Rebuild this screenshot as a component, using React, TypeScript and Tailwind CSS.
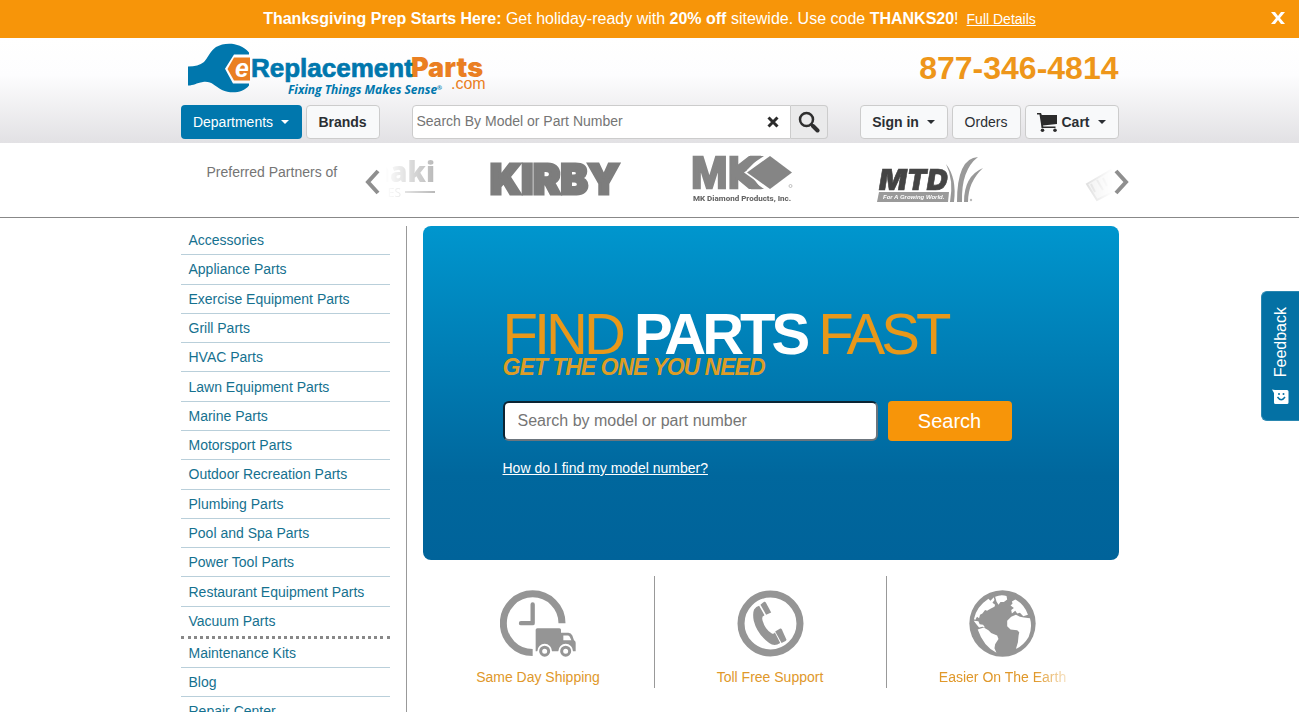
import { useState, type ReactNode } from 'react'

const DEPARTMENTS = [
  'Accessories',
  'Appliance Parts',
  'Exercise Equipment Parts',
  'Grill Parts',
  'HVAC Parts',
  'Lawn Equipment Parts',
  'Marine Parts',
  'Motorsport Parts',
  'Outdoor Recreation Parts',
  'Plumbing Parts',
  'Pool and Spa Parts',
  'Power Tool Parts',
  'Restaurant Equipment Parts',
  'Vacuum Parts',
]
const RESOURCES = ['Maintenance Kits', 'Blog', 'Repair Center']

export default function App() {
  const [promo, setPromo] = useState(true)

  return (
    <div className="min-h-screen bg-white font-['Liberation_Sans',Arial,sans-serif] text-sm text-[#2b2f33]">
      {promo && <PromoBar onClose={() => setPromo(false)} />}
      <Header />
      <Partners />
      <div className="mx-auto flex max-w-[938px] pt-2">
        <Sidebar />
        <main className="ml-4 min-w-0 flex-1">
          <Hero />
          <div className="mt-4 grid grid-cols-3">
            <Perk icon={<ShippingIcon />} className="border-r border-[#999]">Same Day Shipping</Perk>
            <Perk icon={<PhoneIcon />} className="border-r border-[#999]">Toll Free Support</Perk>
            <Perk icon={<GlobeIcon />}>
              <span className="mask-[linear-gradient(to_right,black_75%,transparent_110%)]">Easier On The Earth</span>
            </Perk>
          </div>
        </main>
      </div>
      <button className="fixed top-[291px] right-0 flex h-[130px] w-[38px] flex-col items-center justify-center gap-3 rounded-l-md border border-r-0 border-[#2a87b0] bg-[#0471a4] text-white">
        <span className="rotate-180 text-base leading-5 [writing-mode:vertical-rl]">Feedback</span>
        <FeedbackIcon />
      </button>
    </div>
  )
}

function PromoBar({ onClose }: { onClose: () => void }) {
  return (
    <div className="relative flex h-[38px] items-center justify-center bg-[#f79509] text-base text-white">
      <p>
        <b>Thanksgiving Prep Starts Here:</b> Get holiday-ready with <b>20% off</b> sitewide. Use code <b>THANKS20</b>!
        <a href="#details" className="ml-2 text-sm underline">Full Details</a>
      </p>
      <button onClick={onClose} aria-label="Close" className="absolute top-2 right-[14px]">
        <svg width="14" height="20" viewBox="0 0 14 20" fill="#fff">
          <path d="M0 4H4L7 8L10 4H14L9 10L14 16H10L7 12L4 16H0L5 10Z" />
        </svg>
      </button>
    </div>
  )
}

function Header() {
  return (
    <header className="bg-[linear-gradient(#fff_0%,#fdfdfe_35%,#e2e1e4_100%)]">
      <div className="mx-auto max-w-[938px] pt-1 pb-1">
        <div className="flex h-[56px] items-start justify-between">
          <a href="#home" aria-label="eReplacementParts.com" className="ml-[7px]">
            <Logo />
          </a>
          <a href="tel:877-346-4814" className="text-[32px] leading-[52px] font-bold text-[#ee961a]">877-346-4814</a>
        </div>
        <nav className="mt-[7px] flex h-[34px]">
          <button className="flex w-[121px] items-center justify-center gap-2 rounded bg-[#0077ad] text-white">
            Departments <Caret />
          </button>
          <button className="ml-1 w-[74px] rounded border border-[#ccc] bg-[#f8f9fa] font-bold">Brands</button>
          <form className="mx-8 flex flex-1" onSubmit={e => e.preventDefault()}>
            <div className="relative flex-1">
              <input
                aria-label="Search by model or part number"
                placeholder="Search By Model or Part Number"
                className="h-full w-full rounded-l border border-[#ccc] bg-white px-1 pb-0.5 outline-none placeholder:text-[#757575]"
              />
              <button type="button" aria-label="Clear" className="absolute top-[11px] right-3">
                <svg width="12" height="12" viewBox="0 0 12 12" fill="none" stroke="#2b2b2b" strokeWidth="3">
                  <path d="M1.5 1.5l9 9M10.5 1.5l-9 9" />
                </svg>
              </button>
            </div>
            <button aria-label="Search" className="grid w-[37px] place-items-center rounded-r border border-l-0 border-[#ccc] bg-[#eaeaeb]">
              <SearchIcon />
            </button>
          </form>
          <div className="flex gap-1">
            <NavButton className="w-[88px] font-bold">Sign in <Caret /></NavButton>
            <NavButton className="w-[69px]">Orders</NavButton>
            <NavButton className="w-[94px] font-bold">
              <span className="flex items-center gap-1"><CartIcon />Cart</span> <Caret />
            </NavButton>
          </div>
        </nav>
      </div>
    </header>
  )
}

function NavButton({ className, children }: { className: string; children: ReactNode }) {
  return (
    <button className={`flex items-center justify-center gap-2 rounded border border-[#ccc] bg-[#f8f9fa] ${className}`}>
      {children}
    </button>
  )
}

function Caret() {
  return <span className="h-0 w-0 border-x-4 border-t-4 border-x-transparent border-t-current" />
}

function Partners() {
  return (
    <section className="border-b border-[#888]">
      <div className="mx-auto flex h-[74px] max-w-[938px] text-[#757575]">
        <h2 className="ml-[26px] w-[158px] pt-5 leading-[18px]">Preferred Partners of</h2>
        <button aria-label="Previous" className="mt-1 w-4">
          <Chevron d="M13 2L3 13l10 11" />
        </button>
        <div className="ml-1 flex min-w-0 flex-1 items-center justify-center overflow-hidden pr-3 mask-[linear-gradient(to_right,transparent,black_12%,black_90%,transparent)]">
          <Partner><MakiLogo /></Partner>
          <Partner><KirbyLogo /></Partner>
          <Partner><MkLogo /></Partner>
          <Partner><MtdLogo /></Partner>
          <Partner><TagLogo /></Partner>
        </div>
        <button aria-label="Next" className="mt-1 -mr-[10px] w-4">
          <Chevron d="M3 2l10 11L3 24" />
        </button>
      </div>
    </section>
  )
}

function Partner({ children }: { children: ReactNode }) {
  return <div className="flex w-[187px] shrink-0 justify-center">{children}</div>
}

function Chevron({ d }: { d: string }) {
  return (
    <svg width="16" height="26" viewBox="0 0 16 26" fill="none" stroke="#8f8f8f" strokeWidth="4">
      <path d={d} />
    </svg>
  )
}

function Sidebar() {
  return (
    <aside className="w-[226px] border-r border-[#999] pr-4">
      <ul className="grid min-h-[413px] auto-rows-fr border-b-3 border-dotted border-[#888]">
        {DEPARTMENTS.map(d => (
          <li key={d} className="flex items-center border-b border-[#b9cfda] pl-2 last:border-b-0">
            <a href="#parts" className="text-[#15718f]">{d}</a>
          </li>
        ))}
      </ul>
      <ul>
        {RESOURCES.map(r => (
          <li key={r} className="flex h-[29px] items-center border-b border-[#b9cfda] pl-2">
            <a href="#more" className="text-[#15718f]">{r}</a>
          </li>
        ))}
      </ul>
    </aside>
  )
}

function Hero() {
  return (
    <section className="rounded-lg bg-[linear-gradient(#0096ce_0%,#00679d_75%,#00639a_100%)] px-20 pt-20 pb-[82px] text-white">
      <h1 className="text-[58px] leading-[56px] tracking-[-4px] text-[#e8981a]">
        FIND <b className="text-white">PARTS</b> FAST
      </h1>
      <p className="-mt-1 text-[23px] leading-[18px] font-bold tracking-[-1px] text-[#dd9d26] italic">GET THE ONE YOU NEED</p>
      <form className="mt-[25px] flex h-10 gap-[10px]" onSubmit={e => e.preventDefault()}>
        <input
          aria-label="Model or part number"
          placeholder="Search by model or part number"
          className="w-[375px] rounded-md border-2 border-t-[#0c2433] border-r-[#6c757d] border-b-[#6c757d] border-l-[#0c2433] bg-white px-[13px] text-base outline-none placeholder:text-[#757575]"
        />
        <button className="w-[124px] rounded bg-[#f79509] text-xl">Search</button>
      </form>
      <a href="#help" className="mt-[18px] inline-block leading-[18px] underline">How do I find my model number?</a>
    </section>
  )
}

function Perk({ icon, className = '', children }: { icon: ReactNode; className?: string; children: ReactNode }) {
  return (
    <a href="#perk" className={`flex h-28 flex-col items-center pt-[14px] text-[#e0982a] ${className}`}>
      {icon}
      <span className="mt-[11px] leading-[18px]">{children}</span>
    </a>
  )
}

function Logo() {
  return (
    <svg width="300" height="56" viewBox="0 0 300 56" className="overflow-visible font-['Liberation_Sans',Arial,sans-serif]">
      <path
        fill="#0077ad"
        d="M0 24.500C7 24.500 12 23 16 20C20 16 22 9 28 5C37 0 52 0 61 10.500V12.500H46L37 26.700L45 41.500H61V43.500C55 51 43 52 34 48C26 44 24 39 15 40C8 41 6 43.500 0 43.500Z"
      />
      <path fill="#ea7f22" d="M46 15.500H62V38.500H46L39.500 27Z" />
      <text x="47" y="35" fontSize="25" fontWeight="700" fontStyle="italic" fill="#fff">e</text>
      <text x="63" y="35" fontSize="26" fontWeight="700" fill="#0077ad" stroke="#0077ad" strokeWidth=".7">Replacement</text>
      <text x="223" y="35" fontSize="27" fontWeight="900" fill="#ea7f22" className="font-[Inter,sans-serif]">Parts</text>
      <text x="263" y="47" fontSize="16" fill="#ea7f22">.com</text>
      <text x="100" y="52" fontSize="12" fontWeight="700" fontStyle="italic" fill="#0077ad" className="font-['Open_Sans',sans-serif]">
        Fixing Things Makes Sense<tspan fontSize="6" dy="-4">®</tspan>
      </text>
    </svg>
  )
}

function SearchIcon() {
  return (
    <svg width="22" height="22" viewBox="0 0 22 22" fill="none" stroke="#2f2f2f">
      <circle cx="8.500" cy="8.500" r="6.500" strokeWidth="2.500" />
      <path d="M13 13l2.500 2.500" strokeWidth="2.500" />
      <path d="M15 15l4.500 4.500" strokeWidth="4" strokeLinecap="round" />
    </svg>
  )
}

function CartIcon() {
  return (
    <svg width="20" height="20" viewBox="0 0 20 20" fill="#2b2b2b">
      <path d="M0 1H4L4.800 3H20V12L6 13.500L6.300 14.500H18.500V16H4.500L4 12L2.500 2.500H0Z" />
      <circle cx="5.500" cy="18.200" r="1.800" />
      <circle cx="18" cy="18.200" r="1.800" />
    </svg>
  )
}

function FeedbackIcon() {
  return (
    <svg width="18" height="16" viewBox="0 0 18 16" fill="none">
      <path d="M0 .5L3 1H15Q16.500 1 16.500 2.500V13.500Q16.500 15 15 15H3.500Q2 15 2 13.500V4Z" fill="#fff" />
      <path d="M5.500 8Q9.200 13.500 13 8" stroke="#0471a4" strokeWidth="1.400" />
      <circle cx="7" cy="5" r="1" fill="#0471a4" />
      <circle cx="11.500" cy="5" r="1" fill="#0471a4" />
    </svg>
  )
}

function MakiLogo() {
  return (
    <svg width="132" height="48" viewBox="0 0 132 48" className="overflow-visible font-['Open_Sans',sans-serif]" fill="#858585">
      <text x="132" y="26" fontSize="28" fontWeight="800" textAnchor="end">haki</text>
      <text x="98" y="41" fontSize="12" textAnchor="end">ES</text>
      <path d="M102 35h30v2h-30z" />
    </svg>
  )
}

function KirbyLogo() {
  return (
    <svg width="134" height="48" viewBox="0 0 134 48" className="overflow-visible font-[Inter,sans-serif]">
      <text x="1" y="38" fontSize="41" fontWeight="900" fill="#7d7d7d" stroke="#7d7d7d" strokeWidth="3">KIRBY</text>
    </svg>
  )
}

function MkLogo() {
  return (
    <svg width="100" height="50" viewBox="0 0 100 50" className="overflow-visible">
      <text x="-2" y="33" fontSize="44" fontWeight="700" fill="#858585" stroke="#858585" strokeWidth="2.500" className="font-['Liberation_Sans',sans-serif]">MK</text>
      <path d="M56 1H71L47 17L71 34H56L38 19V15Z" fill="#858585" />
      <path d="M77 -1L51 17.500L77 36H100V0Z" fill="#fff" />
      <path d="M77 1L99 17.500L77 34L54 17.500Z" fill="#858585" />
      <text x="0" y="46" fontSize="8" fontWeight="800" fill="#666" className="font-[Roboto,sans-serif]">MK Diamond Products, Inc.</text>
      <circle cx="97.500" cy="31" r="1.500" fill="none" stroke="#999" strokeWidth=".6" />
    </svg>
  )
}

function MtdLogo() {
  return (
    <svg width="106" height="48" viewBox="0 0 106 48" className="overflow-visible">
      <text x="2" y="34" fontSize="29" fontWeight="900" fontStyle="italic" fill="#444" stroke="#444" strokeWidth=".6" className="font-[Inter,sans-serif]">MTD</text>
      <path d="M2 36H72L71 46H0Z" fill="#9a9a9a" />
      <text x="6" y="43" fontSize="6" fontStyle="italic" fontWeight="700" fill="#fff" className="font-['Liberation_Sans',sans-serif]">For A Growing World.</text>
      <g fill="#999">
        <path d="M69 8Q80 22 77 46H73Q77 24 69 8Z" />
        <path d="M101 1Q84 14 85 46H80Q80 2 101 1Z" />
        <path d="M106 12Q91 26 91 46H87Q87 20 106 12Z" />
      </g>
      <circle cx="94" cy="44" r="1.200" fill="#bbb" />
    </svg>
  )
}

function TagLogo() {
  return (
    <svg width="64" height="48" viewBox="0 0 64 48" fill="none" stroke="#aaa" strokeWidth="2">
      <path d="M2 28L26 14L40 30L12 44Z" fill="#ddd" />
      <path d="M6 28l4 8M12 24l6 10M18 22l4 8" />
    </svg>
  )
}

function ShippingIcon() {
  return (
    <svg width="76" height="67" viewBox="0 0 228 200" fill="#959595">
      <path d="M98 187A88 88 0 1 1 186 99" fill="none" stroke="#959595" strokeWidth="21" />
      <path d="M98 43V99H63" fill="none" stroke="#959595" strokeWidth="13" strokeLinecap="round" strokeLinejoin="round" />
      <rect x="100" y="108" width="128" height="92" fill="#fff" />
      <path d="M107 119Q107 114 112 114H178Q183 114 183 119V128H205Q213 128 217 136L222 150Q227 152 227 158V183H107Z" />
      <path d="M190 136H204Q208 136 210 141L214 150H190Z" fill="#fff" />
      <circle cx="134" cy="183" r="22" fill="#fff" />
      <circle cx="197" cy="183" r="22" fill="#fff" />
      <circle cx="134" cy="183" r="12" fill="none" stroke="#959595" strokeWidth="9" />
      <circle cx="197" cy="183" r="12" fill="none" stroke="#959595" strokeWidth="9" />
    </svg>
  )
}

function PhoneIcon() {
  return (
    <svg width="67" height="67" viewBox="0 0 200 200" fill="#959595">
      <circle cx="100" cy="100" r="88" fill="none" stroke="#959595" strokeWidth="21" />
      <path d="M51 58Q57 49 66 47L82 75Q73 78 76 90Q84 118 104 130Q110 132 113 127L129 158Q112 170 96 158Q60 132 50 92Q46 70 51 58Z" />
      <path d="M70 44L81 35Q84 34 86 37L102 67L87 74Z" />
      <path d="M114 124L129 115Q132 114 134 118L147 147Q148 150 145 152L133 158Z" />
    </svg>
  )
}

function GlobeIcon() {
  return (
    <svg width="67" height="67" viewBox="0 0 200 200">
      <circle cx="100" cy="100" r="99" fill="#959595" />
      <g fill="#fff">
        <path d="M15 86Q22 50 58 26L64 32L74 22L76 30L70 38L78 44L76 50L64 56L54 62L48 60L40 70L33 74L30 84L24 80L18 90Z" />
        <path d="M78 20Q96 12 112 18L114 28L104 36L94 36L88 44L82 34Z" />
        <path d="M14 92L28 93L32 102L42 104L48 112L40 110L30 112L22 102Z" />
        <path d="M26 118L44 112L58 120L66 128L84 136L88 146L78 162L76 174L82 187Q44 170 26 118Z" />
        <path d="M124 46L130 40L128 34L138 28Q166 44 176 74L162 78L152 68L144 70L138 62L128 70L126 60L134 54Z" />
        <path d="M114 92L126 80L140 74L152 80L164 82L182 84Q190 112 178 140Q164 164 140 176L146 156L148 136L150 126L144 120L124 118L114 108Z" />
      </g>
    </svg>
  )
}
